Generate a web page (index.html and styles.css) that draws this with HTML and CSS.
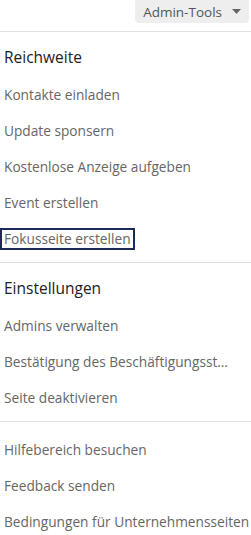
FILE: index.html
```html
<!DOCTYPE html>
<html lang="de">
<head>
    <meta charset="UTF-8">
    <meta name="viewport" content="width=device-width, initial-scale=1.0">
    <title>Admin-Tools</title>
    <link rel="stylesheet" href="styles.css">
</head>
<body>
    <div class="toolbar">
        <button class="admin-button">
            Admin-Tools
            <svg class="caret" width="9" height="5" viewBox="0 0 9 5"><path d="M0 0h9L4.5 5z" fill="#666"/></svg>
        </button>
    </div>

    <div class="section">
        <h3>Reichweite</h3>
        <a href="#" class="item">Kontakte einladen</a>
        <a href="#" class="item">Update sponsern</a>
        <a href="#" class="item">Kostenlose Anzeige aufgeben</a>
        <a href="#" class="item">Event erstellen</a>
        <a href="#" class="item focused">Fokusseite erstellen</a>
    </div>

    <div class="section">
        <h3>Einstellungen</h3>
        <a href="#" class="item">Admins verwalten</a>
        <a href="#" class="item truncate">Bestätigung des Beschäftigungsstatus</a>
        <a href="#" class="item">Seite deaktivieren</a>
    </div>

    <div class="section plain">
        <a href="#" class="item">Hilfebereich besuchen</a>
        <a href="#" class="item">Feedback senden</a>
        <a href="#" class="item">Bedingungen für Unternehmensseiten</a>
    </div>
</body>
</html>
```

FILE: styles.css
```css
html, body {
    height: 535px;
}

body {
    margin: 0;
    font-family: 'Open Sans', 'Noto Sans', sans-serif;
    background-color: #fff;
    color: #666;
    width: 251px;
    overflow: hidden;
}

.toolbar {
    display: flex;
    justify-content: flex-end;
    padding-right: 2px;
    height: 32px;
    border-bottom: 1px solid #e0e0e0;
    box-sizing: border-box;
}

.admin-button {
    display: flex;
    align-items: center;
    gap: 10px;
    height: 23px;
    padding: 0 8px 0 8px;
    border: none;
    border-radius: 0 0 4px 4px;
    background-color: #eeeeee;
    color: #555;
    font-family: inherit;
    font-size: 13.5px;
}

.section {
    display: flex;
    flex-direction: column;
    border-bottom: 1px solid #e0e0e0;
    padding-bottom: 5px;
}

.section.plain {
    border-bottom: none;
    padding-top: 10px;
    padding-bottom: 0;
}

h3 {
    margin: 11px 0 6px;
    padding-left: 4px;
    font-size: 15.5px;
    font-weight: 400;
    color: #222;
    line-height: 28px;
}

.item {
    display: block;
    padding: 0 4px;
    line-height: 36px;
    font-size: 13.7px;
    color: #666;
    text-decoration: none;
    white-space: nowrap;
}

.item.focused {
    align-self: flex-start;
    padding: 0 2px;
    border: 2px solid #1e2a56;
    line-height: 18px;
    margin: 7px 0;
}

.item.truncate {
    max-width: 228px;
    overflow: hidden;
    text-overflow: ellipsis;
}
```
